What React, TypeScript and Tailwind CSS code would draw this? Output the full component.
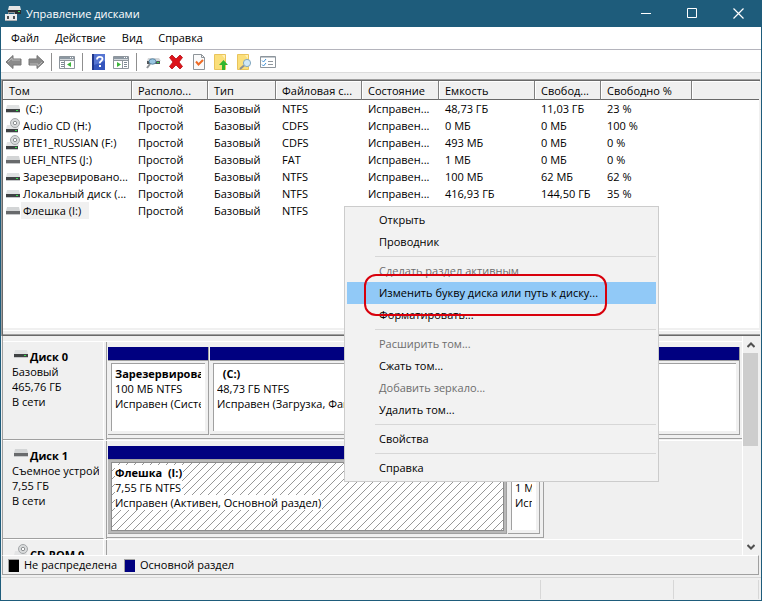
import type { ReactNode } from "react";
import clsx from "clsx";

type DriveKind = "disk" | "cd" | "removable";

interface Volume {
  name: string;
  kind: DriveKind;
  fs: string;
  capacity?: string;
  free?: string;
  percent?: string;
  selected?: boolean;
}

const volumes: Volume[] = [
  { name: "\u00a0(C:)", kind: "disk", fs: "NTFS", capacity: "48,73 ГБ", free: "11,03 ГБ", percent: "23 %" },
  { name: "Audio CD (H:)", kind: "cd", fs: "CDFS", capacity: "0 МБ", free: "0 МБ", percent: "100 %" },
  { name: "BTE1_RUSSIAN (F:)", kind: "cd", fs: "CDFS", capacity: "493 МБ", free: "0 МБ", percent: "0 %" },
  { name: "UEFI_NTFS (J:)", kind: "removable", fs: "FAT", capacity: "1 МБ", free: "0 МБ", percent: "0 %" },
  { name: "Зарезервировано...", kind: "disk", fs: "NTFS", capacity: "100 МБ", free: "62 МБ", percent: "62 %" },
  { name: "Локальный диск (...", kind: "disk", fs: "NTFS", capacity: "416,93 ГБ", free: "144,50 ГБ", percent: "35 %" },
  { name: "Флешка (I:)", kind: "removable", fs: "NTFS", selected: true },
];

const columns = [
  { title: "Том", width: "w-[129px]" },
  { title: "Располо...", width: "w-[76px]" },
  { title: "Тип", width: "w-[68px]" },
  { title: "Файловая с...", width: "w-[86px]" },
  { title: "Состояние", width: "w-[77px]" },
  { title: "Емкость", width: "w-[96px]" },
  { title: "Свобод...", width: "w-[66px]" },
  { title: "Свободно %", width: "w-[91px]" },
];

const menuGroups = [
  [{ label: "Открыть" }, { label: "Проводник" }],
  [
    { label: "Сделать раздел активным", disabled: true },
    { label: "Изменить букву диска или путь к диску...", active: true },
    { label: "Форматировать..." },
  ],
  [
    { label: "Расширить том...", disabled: true },
    { label: "Сжать том..." },
    { label: "Добавить зеркало...", disabled: true },
    { label: "Удалить том..." },
  ],
  [{ label: "Свойства" }],
  [{ label: "Справка" }],
] as { label: string; disabled?: boolean; active?: boolean }[][];

function DriveIcon({ kind }: { kind: DriveKind }) {
  if (kind === "cd") {
    return (
      <svg width="14" height="16" viewBox="0 0 14 16" className="shrink-0" aria-hidden="true">
        <path d="M1 7h11l1 4H0z" fill="#e3e4e5" />
        <path d="M0 11h12v3H0z" fill="#3f4244" />
        <path d="M0 14h12v1H0z" fill="#c6c8ca" />
        <path d="M9 12h2v1H9z" fill="#35e04c" />
        <circle cx="9" cy="5" r="4.500" fill="#d9dbdc" stroke="#a3a6a8" />
        <circle cx="9" cy="5" r="1.700" fill="#fff" stroke="#8c8f91" />
      </svg>
    );
  }
  return (
    <svg width="14" height="16" viewBox="0 0 14 16" className="shrink-0" aria-hidden="true">
      <path d="M1 4h12l1 4H0z" fill={kind === "removable" ? "#d3d5d6" : "#dfe1e2"} />
      <path d="M0 8h14v3H0z" fill={kind === "removable" ? "#686a6c" : "#3f4244"} />
      <path d="M0 11h14v1H0z" fill="#c6c8ca" />
      {kind === "disk" && <path d="M10 9h2v1h-2z" fill="#35e04c" />}
    </svg>
  );
}

function AppIcon() {
  return (
    <svg width="16" height="16" viewBox="0 0 16 16" aria-hidden="true">
      <path d="M4 0h11l1 4H3z" fill="#e3e5e6" />
      <path d="M3 4h13v4H3z" fill="#2a2f32" />
      <path d="M13 5h2v1h-2z" fill="#3edc57" />
      <path d="M3 6h7v3H3z" fill="#8d9295" />
      <path d="M4 7h5v2H4z" fill="#1e5c7b" />
      <path d="M0 8h12v7H0z" fill="#eceeee" />
      <path d="M0 14h12v1H0z" fill="#a9adb0" />
      <path d="M2 10h2v3H2zM8 10h2v3H8z" fill="#4c5154" />
    </svg>
  );
}

function ArrowIcon({ right = false }: { right?: boolean }) {
  return (
    <svg width="17" height="16" viewBox="0 0 17 16" className={right ? "rotate-180" : ""} aria-hidden="true">
      <path d="M1 8 8 1.500V5h8v6H8v3.500z" fill="#8b8b8b" stroke="#777" />
      <path d="M3 8 7 4v2h8" fill="none" stroke="#b9b9b9" />
    </svg>
  );
}

function PanelIcon({ right = false }: { right?: boolean }) {
  return (
    <svg width="17" height="16" viewBox="0 0 17 16" aria-hidden="true">
      <path d="M.5 2.500h15v12H.5z" fill="#fff" stroke="#8d959c" />
      <path d="M1 3h14v2H1z" fill="#8d98a2" />
      <path d="M1 5h14v1H1z" fill="#d3d8dc" />
      <path d="M11 3h1v1h-1zM13 3h1v1h-1z" fill="#fff" />
      <path d="M1 6.500h14" stroke="#8d959c" />
      {right ? (
        <>
          <path d="M9.500 7v7" stroke="#8d959c" />
          <path d="M4 8v5l4-2.500z" fill="#3bb53a" />
          <path d="M11 8.500h3M11 10.500h3M11 12.500h3" stroke="#7d8993" />
        </>
      ) : (
        <>
          <path d="M5.500 7v7" stroke="#8d959c" />
          <path d="M12 8v5l-4-2.500z" fill="#3bb53a" />
          <path d="M2 8.500h3M2 10.500h3M2 12.500h3" stroke="#7d8993" />
        </>
      )}
    </svg>
  );
}

function HelpIcon() {
  return (
    <svg width="13" height="16" viewBox="0 0 13 16" aria-hidden="true">
      <path d="M0 0h13v16H0z" fill="#3556bd" />
      <path d="M0 0h2v16H0z" fill="#20378c" />
      <path d="M2 0h11v7L2 11z" fill="#5675d2" />
      <path d="M5 5.500c0-3.500 5.500-3.500 5.500-.5 0 2-2.800 2-2.800 4.500" fill="none" stroke="#fff" strokeWidth="1.800" />
      <path d="M7 11h2v2H7z" fill="#fff" />
    </svg>
  );
}

function RescanIcon() {
  return (
    <svg width="16" height="16" viewBox="0 0 16 16" aria-hidden="true">
      <path d="M3 4h11l2 3H2z" fill="#d4d6d8" />
      <path d="M2 7h13v3H2z" fill="#50565a" />
      <path d="M12 8h2v1h-2z" fill="#38d84c" />
      <path d="m5 10-3 4" stroke="#8c9195" strokeWidth="2" />
      <ellipse cx="7.500" cy="7.500" rx="3.500" ry="2.700" fill="#9ac6e2" stroke="#5e88a4" />
    </svg>
  );
}

function DeleteIcon() {
  return (
    <svg width="16" height="16" viewBox="0 0 16 16" aria-hidden="true">
      <path d="M1.500 3.500 4 1l4 4 4-4 2.500 2.500L11 8l3.500 4.500L12 15l-4-4-4 4-2.500-2.500L5 8z" fill="#dd141b" stroke="#b50d13" strokeWidth=".8" />
    </svg>
  );
}

function CheckDocIcon() {
  return (
    <svg width="12" height="16" viewBox="0 0 12 16" aria-hidden="true">
      <path d="M.5.5h8l3 3v12H.5z" fill="#fafafa" stroke="#8e9499" />
      <path d="M8.500.5v3h3" fill="none" stroke="#8e9499" />
      <path d="m3 7.500 2.500 3L10 6" fill="none" stroke="#ee6a24" strokeWidth="2" />
    </svg>
  );
}

function FolderIcon({ search = false }: { search?: boolean }) {
  return (
    <svg width="15" height="16" viewBox="0 0 15 16" aria-hidden="true">
      <path d="M.5.5h11v15H.5z" fill="#fbdf7a" stroke="#e9c45c" />
      <path d="M8 1h3v4z" fill="#fff0b5" />
      {search ? (
        <>
          <path d="m7 11.500-4 3.500" stroke="#8a8f94" strokeWidth="2" />
          <circle cx="10" cy="9" r="3.600" fill="#cfe8f7" stroke="#83a8bf" />
        </>
      ) : (
        <path d="m9.500 6 4.500 5h-3v5H8v-5H5z" fill="#31b62f" />
      )}
    </svg>
  );
}

function ChecklistIcon() {
  return (
    <svg width="16" height="16" viewBox="0 0 16 16" aria-hidden="true">
      <path d="M.5 2.500h15v11H.5z" fill="#fff" stroke="#8d959c" />
      <path d="M1 3h14v1H1z" fill="#c3c9ce" />
      <path d="m2 6.500 1.500 1.500L6 5M2 10.500 3.500 12 6 9" fill="none" stroke="#3b8fd6" />
      <path d="M8 7.500h5M8 10.500h5" stroke="#8f979d" />
    </svg>
  );
}

function ToolButton({ label, children }: { label: string; children: ReactNode }) {
  return (
    <button type="button" aria-label={label} className="flex h-5 w-[23px] items-center justify-center">
      {children}
    </button>
  );
}

function ToolDivider() {
  return <span className="mr-1 ml-[3px] h-4.5 w-px bg-[#8f8f8f]" />;
}

function TitleBar() {
  return (
    <header className="flex h-[27px] shrink-0 items-center bg-[#1e5c7b] pl-1 text-white">
      <AppIcon />
      <h1 className="ml-[5px] flex-1">Управление дисками</h1>
      <button type="button" aria-label="Свернуть" className="flex h-full w-[46px] items-center justify-center">
        <svg width="11" height="11" viewBox="0 0 11 11">
          <path d="M0 5.500h10" stroke="#fff" />
        </svg>
      </button>
      <button type="button" aria-label="Развернуть" className="flex h-full w-[46px] items-center justify-center">
        <svg width="11" height="11" viewBox="0 0 11 11">
          <path d="M.5.5h9v9h-9z" fill="none" stroke="#fff" />
        </svg>
      </button>
      <button type="button" aria-label="Закрыть" className="flex h-full w-[46px] items-center justify-center">
        <svg width="11" height="11" viewBox="0 0 11 11">
          <path d="m.5.5 10 10m0-10-10 10" stroke="#fff" strokeWidth="1.200" />
        </svg>
      </button>
    </header>
  );
}

function MenuBar() {
  return (
    <nav className="flex h-[22px] shrink-0 items-center bg-white pl-0.5">
      {["Файл", "Действие", "Вид", "Справка"].map((item) => (
        <button key={item} type="button" className="px-2">
          {item}
        </button>
      ))}
    </nav>
  );
}

function ToolBar() {
  return (
    <div className="flex h-6 shrink-0 items-center border-y border-t-[#b4b4bc] border-b-[#dcdcdc] bg-white pt-px pl-px">
      <ToolButton label="Назад"><ArrowIcon /></ToolButton>
      <ToolButton label="Вперед"><ArrowIcon right /></ToolButton>
      <ToolDivider />
      <ToolButton label="Дерево консоли"><PanelIcon /></ToolButton>
      <ToolDivider />
      <ToolButton label="Справка"><HelpIcon /></ToolButton>
      <ToolButton label="Панель действий"><PanelIcon right /></ToolButton>
      <ToolDivider />
      <ToolButton label="Обновить"><RescanIcon /></ToolButton>
      <ToolButton label="Удалить"><DeleteIcon /></ToolButton>
      <ToolButton label="Свойства"><CheckDocIcon /></ToolButton>
      <ToolButton label="Вверх"><FolderIcon /></ToolButton>
      <ToolButton label="Поиск"><FolderIcon search /></ToolButton>
      <ToolButton label="Параметры"><ChecklistIcon /></ToolButton>
    </div>
  );
}

function VolumeTable() {
  return (
    <table className="w-full table-fixed border-separate border-spacing-0 text-left leading-[17px] whitespace-nowrap">
      <thead>
        <tr className="bg-[#f0f0f0]">
          {columns.map((col) => (
            <th
              key={col.title}
              className={clsx(
                col.width,
                "h-[19px] border-r border-b border-r-[#808080] border-b-[#696969] pl-1.5 font-normal shadow-[inset_1px_1px_0_#fff]",
              )}
            >
              {col.title}
            </th>
          ))}
          <th aria-label="Пусто" className="border-b border-b-[#696969] shadow-[inset_1px_1px_0_#fff]" />
        </tr>
      </thead>
      <tbody>
        {volumes.map((v) => (
          <tr key={v.name}>
            <td className="pl-[3px]">
              <div className="flex h-[17px] items-center">
                <DriveIcon kind={v.kind} />
                <span className={clsx("ml-px pl-0.5", v.selected && "bg-[#f0f0f0] pr-2")}>{v.name}</span>
              </div>
            </td>
            <td className="pl-1.5">Простой</td>
            <td className="pl-1.5">Базовый</td>
            <td className="pl-1.5">{v.fs}</td>
            <td className="pl-1.5">{v.capacity && "Исправен..."}</td>
            <td className="pl-1.5">{v.capacity}</td>
            <td className="pl-1.5">{v.free}</td>
            <td className="pl-1.5">{v.percent}</td>
            <td />
          </tr>
        ))}
      </tbody>
    </table>
  );
}

function Hatch() {
  return (
    <svg className="absolute inset-0 h-full w-full" aria-hidden="true">
      <defs>
        <pattern id="hatch" width="8" height="8" patternUnits="userSpaceOnUse">
          <path d="M-1 9 9-1M-1 1 1-1M7 9l2-2" stroke="#979797" />
        </pattern>
      </defs>
      <rect width="100%" height="100%" fill="url(#hatch)" />
    </svg>
  );
}

interface PartitionProps {
  width: string;
  title?: string;
  lines?: string[];
  selected?: boolean;
}

function Partition({ width, title, lines = [], selected }: PartitionProps) {
  return (
    <div className={clsx("flex min-w-0 flex-col", width)}>
      <div className="h-[13px] shrink-0 border-r border-[#a0a0a0] bg-[#000080]" />
      <div
        className={clsx(
          "flex min-h-0 flex-1 border-t border-r border-b border-[#a0a0a0] pt-0.5 pl-[3px]",
          selected ? "bg-[#b8b8b8] pr-0.5 pb-0.5" : "pr-[3px] pb-[3px]",
        )}
      >
        <div
          className={clsx(
            "relative min-w-0 flex-1 overflow-hidden bg-white pt-0.5 pr-1 pl-[3px] leading-[15px] whitespace-nowrap",
            selected ? "border border-[#8c8c8c]" : "border-t border-l border-[#a0a0a0]",
          )}
        >
          {selected && <Hatch />}
          <div className="relative overflow-hidden">
            <div className="h-[15px]">
              <strong className="inline-block bg-white pr-px whitespace-pre">{title}</strong>
            </div>
            {lines.map((line) => (
              <div key={line} className="h-[15px]">
                <span className="inline-block bg-white pr-px">{line}</span>
              </div>
            ))}
          </div>
        </div>
      </div>
    </div>
  );
}

interface DiskProps {
  name: string;
  kind: DriveKind;
  lines?: string[];
  area?: string;
  children?: ReactNode;
}

function Disk({ name, kind, lines = [], area, children }: DiskProps) {
  return (
    <section className="flex h-[99px] shrink-0 border-t border-white">
      <div className="w-[101px] shrink-0 overflow-hidden border-r border-b border-r-white border-b-[#a0a0a0] pt-1 pr-1 pl-[9px] leading-[15px] whitespace-nowrap">
        <div className="flex h-[18px] items-start pl-0.5">
          <DriveIcon kind={kind} />
          <h2 className="ml-0.5 self-end font-bold">{name}</h2>
        </div>
        <div className="overflow-hidden">
          {lines.map((line) => (
            <p key={line}>{line}</p>
          ))}
        </div>
      </div>
      <div className="ml-0.5 flex min-w-0 flex-1 border-l border-[#a0a0a0] pb-px">
        {children && (
          <div className={clsx("flex gap-px border-b border-[#a0a0a0] pt-[5px] pb-[3px] pl-px", area)}>{children}</div>
        )}
      </div>
    </section>
  );
}

function ScrollBar() {
  return (
    <div className="flex w-[17px] shrink-0 flex-col border-l border-white bg-[#f0f0f0]">
      <button type="button" aria-label="Прокрутить вверх" className="flex h-[17px] items-center justify-center">
        <svg width="8" height="6" viewBox="0 0 8 6">
          <path d="m.5 5 3.500-3.500L7.500 5" fill="none" stroke="#505050" strokeWidth="2" />
        </svg>
      </button>
      <div className="mr-px h-[93px] bg-[#cdcdcd]" />
      <div className="flex-1" />
      <button type="button" aria-label="Прокрутить вниз" className="flex h-[17px] items-center justify-center">
        <svg width="8" height="6" viewBox="0 0 8 6">
          <path d="m.5 1 3.500 3.500L7.500 1" fill="none" stroke="#505050" strokeWidth="2" />
        </svg>
      </button>
    </div>
  );
}

function ContextMenu() {
  return (
    <div
      role="menu"
      className="absolute top-[206px] left-[343px] z-10 w-[315px] border border-[#ccc] bg-[#f2f2f2] p-0.5"
    >
      {menuGroups.map((group, i) => (
        <div key={group[0].label}>
          {i > 0 && <hr className="my-[3px] ml-7 border-t border-[#d7d7d7]" />}
          {group.map((item) => (
            <button
              key={item.label}
              type="button"
              role="menuitem"
              disabled={item.disabled}
              className={clsx(
                "block h-[22px] w-full pl-8 text-left whitespace-nowrap",
                item.disabled && "text-[#6d6d6d]",
                item.active && "bg-[#91c9f7]",
              )}
            >
              {item.label}
            </button>
          ))}
        </div>
      ))}
      {/* red marker around the highlighted command */}
      <div className="pointer-events-none absolute top-[67px] left-[19px] h-[42px] w-[243px] rounded-xl border-2 border-[#d8000c]" />
    </div>
  );
}

export default function App() {
  return (
    <main className="relative flex h-screen min-h-[520px] flex-col overflow-hidden border-r border-b border-l border-[#1e5c7b] bg-[#f0f0f0] font-['Open_Sans','Noto_Sans',sans-serif] text-[11px] leading-[16px] text-black">
      <TitleBar />
      <MenuBar />
      <ToolBar />

      <div className="mt-1.5 mr-px flex min-h-0 flex-1 flex-col border-t border-l border-[#a0a0a0]">
        <div className="flex min-h-0 flex-1 flex-col border-t border-l border-[#696969]">
          <div className="mr-px min-h-0 flex-1 overflow-hidden bg-white">
            <VolumeTable />
          </div>
          <div className="mt-0.5 h-[5px] shrink-0 border-t border-b border-t-white border-b-[#a0a0a0]" />
          <div className="h-px shrink-0 bg-[#696969]" />
        </div>
      </div>

      <div className="mr-0.5 ml-px flex h-[219px] shrink-0 border-l border-[#a0a0a0]">
        <div className="flex min-w-0 flex-1 flex-col overflow-hidden pt-[5px]">
          <Disk name="Диск 0" kind="disk" lines={["Базовый", "465,76 ГБ", "В сети"]} area="flex-1 pr-0.5">
            <Partition width="w-[101px]" title="Зарезервировано" lines={["100 МБ NTFS", "Исправен (Система)"]} />
            <Partition width="flex-1" title="  (C:)" lines={["48,73 ГБ NTFS", "Исправен (Загрузка, Файл подкачки)"]} />
            <Partition width="flex-1" />
          </Disk>
          <Disk
            name="Диск 1"
            kind="removable"
            lines={["Съемное устройство", "7,55 ГБ", "В сети"]}
            area="w-[437px] border-r pr-[3px]"
          >
            <Partition
              width="flex-1"
              title="Флешка  (I:)"
              lines={["7,55 ГБ NTFS", "Исправен (Активен, Основной раздел)"]}
              selected
            />
            <Partition width="w-8" lines={["1 МБ", "Исправен"]} />
          </Disk>
          <Disk name="CD-ROM 0" kind="cd" />
        </div>
        <ScrollBar />
      </div>

      <div className="mr-0.5 ml-px flex h-5 shrink-0 items-center border-t border-r border-b border-l border-[#a0a0a0] border-t-white pl-[5px]">
        <span className="h-[13px] w-[11px] border-t border-l border-[#a0a0a0] bg-black" />
        <span className="ml-[5px]">Не распределена</span>
        <span className="ml-[7px] h-[13px] w-[11px] border-t border-l border-[#a0a0a0] bg-[#000080]" />
        <span className="ml-[5px]">Основной раздел</span>
      </div>

      <footer className="mt-0.5 flex h-[23px] shrink-0 border-t border-[#d7d7d7] pt-0.5 pr-0.5 pb-px">
        <div className="flex-1 border-r border-[#d7d7d7]" />
        <div className="w-[133px] border-r border-[#d7d7d7]" />
        <div className="w-[85px] border-r border-[#d7d7d7]" />
      </footer>

      <ContextMenu />
    </main>
  );
}
